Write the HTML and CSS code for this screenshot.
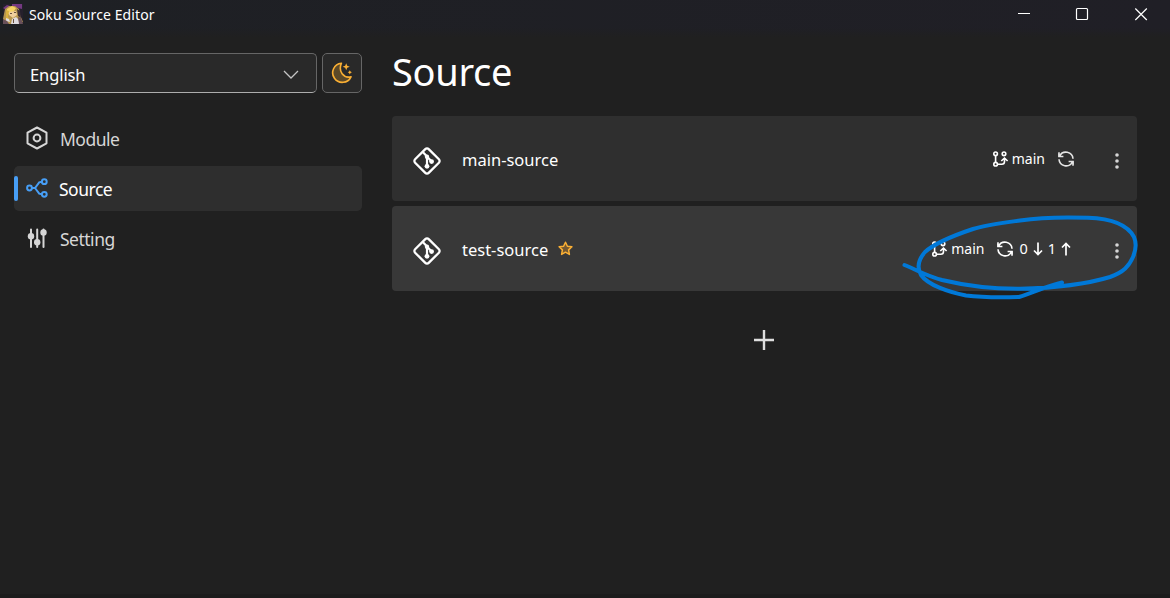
FILE: index.html
```html
<!DOCTYPE html>
<html lang="en">
<head>
<meta charset="utf-8">
<title>Soku Source Editor</title>
<link rel="stylesheet" href="styles.css">
</head>
<body>
<svg class="defs" width="0" height="0" aria-hidden="true">
  <symbol id="git" viewBox="0 0 28 28">
    <path d="M12.3 2.1a2.4 2.4 0 0 1 3.4 0L25.9 12.3a2.4 2.4 0 0 1 0 3.4L15.7 25.9a2.4 2.4 0 0 1-3.4 0L2.1 15.7a2.4 2.4 0 0 1 0-3.4z" fill="none" stroke="currentColor" stroke-width="2.3"/>
    <path d="M10 5.2l4 4.3v10M14.2 9.7l4.2 4.6" fill="none" stroke="currentColor" stroke-width="2.2"/>
    <g fill="currentColor"><circle cx="14" cy="9.8" r="2.2"/><circle cx="14" cy="19.3" r="2.4"/><circle cx="18.6" cy="14.6" r="2.4"/></g>
  </symbol>
  <symbol id="branch" viewBox="0 0 16 16">
    <g fill="none" stroke="currentColor" stroke-width="1.6"><circle cx="2.6" cy="2.8" r="1.8"/><circle cx="2.6" cy="13.2" r="1.8"/><circle cx="11" cy="2.8" r="1.8"/><path d="M2.6 4.7v6.600M4.500 13.200h4.300q2.700 0 2.700-2.700V7.600M8.300 10l3.200-3 3.100 3"/></g>
  </symbol>
  <symbol id="sync" viewBox="0 0 16 16">
    <g fill="none" stroke="currentColor" stroke-width="1.6"><path d="M1.6 5A7.1 7.1 0 0 1 15 7.7M14.4 11A7.1 7.1 0 0 1 1 8.3"/><path d="M1 1.3v4.2h4.4M15 14.7v-4.2h-4.4"/></g>
    <path d="M.4 2.2v3.9h4zM15.6 13.8V9.9h-4z" fill="currentColor"/>
  </symbol>
  <symbol id="dots" viewBox="0 0 4 16"><g fill="currentColor"><circle cx="2" cy="2" r="1.8"/><circle cx="2" cy="8" r="1.8"/><circle cx="2" cy="14" r="1.8"/></g></symbol>
</svg>

<header class="titlebar">
  <svg class="avatar" width="20" height="20" viewBox="0 0 20 20">
    <path d="M0 0h20v20H0z" fill="#25202c"/>
    <path d="M0 4l4-3 3 1-4 4zM9 0h10v5l-4-1-6-2z" fill="#743981"/>
    <path d="M2 5l4-3h6l4 3 1 6 3 7-5 2H3l-3-5z" fill="#b8974e"/>
    <path d="M4 5l5-3 4 2-2 3-7 4z" fill="#f6d363"/>
    <path d="M14 5l3 2 1 7-3-2z" fill="#3b2e36"/>
    <path d="M6 8l7-1 1 4-4 3-4-3z" fill="#f0cf9c"/>
    <path d="M3 6l3 1-1 6 2 3-4-1z" fill="#d9b040"/>
    <path d="M3 14l3 1 1 3-4-1zM9 15l4-2 2 2 2 5H8z" fill="#e0dce0"/>
    <path d="M0 15l4 2 2 3H0zM15 13l3 1 2 6h-4z" fill="#68505a"/>
    <path d="M7 9h2v1H7zM11 8h2v1h-2zM10 15h1v4h-1z" fill="#66503e"/>
  </svg>
  <span class="app-name">Soku Source Editor</span>
  <svg class="window-controls" width="138" height="28" viewBox="0 0 138 28" fill="none" stroke="#fff">
    <path d="M0 13.5h12"/><rect x="58.5" y="8.5" width="11" height="11" rx="1" stroke-width="1.2"/><path d="M117.300 8.500l11.500 11.500M128.800 8.500L117.300 20" stroke-width="1.2"/>
  </svg>
</header>

<div class="shell">
  <aside class="sidebar">
    <div class="toolbar">
      <div class="select"><span>English</span>
        <svg class="chevron" width="16" height="10" viewBox="0 0 16 10" fill="none" stroke="#c4c4c4" stroke-width="1.3"><path d="M1 1l7 7 7-7"/></svg>
      </div>
      <div class="theme">
        <svg width="22" height="22" viewBox="0 0 22 22"><path d="M10.400 1.200A9.600 9.600 0 1 0 20 14.800C12.500 16.500 7 9.500 10.400 1.200z" fill="#5c4928" stroke="#fbb034" stroke-width="1.6" stroke-linejoin="round"/><path d="M15.200 1.200l1 2.500 2.600 1-2.600 1-1 2.600-1-2.600-2.600-1 2.600-1z" fill="#fbb034"/><path d="M18.800 8.200l.7 1.400 1.400.7-1.400.7-.7 1.400-.7-1.400-1.400-.7 1.400-.7z" fill="#fbb034"/></svg>
      </div>
    </div>
    <nav>
      <div class="nav-item">
        <svg width="24" height="24" viewBox="0 0 24 24" fill="none" stroke="currentColor" stroke-width="2" stroke-linejoin="round"><path d="M12 1.500l9.500 5.200v10.600L12 22.500l-9.500-5.200V6.700z"/><circle cx="12" cy="12" r="3.400"/></svg>
        <span>Module</span>
      </div>
      <div class="nav-item active">
        <svg width="24" height="24" viewBox="0 0 24 24" fill="none" stroke="#479ef5" stroke-width="2"><circle cx="4.500" cy="12" r="2.400"/><circle cx="19.300" cy="5.700" r="2.400"/><circle cx="19.300" cy="18.300" r="2.400"/><path d="M7 12h3l4.200-5.600 2.800-.7M10 12l4.200 5.600 2.800.7"/></svg>
        <span>Source</span>
      </div>
      <div class="nav-item">
        <svg width="24" height="24" viewBox="0 0 24 24" fill="none" stroke="currentColor" stroke-width="2" stroke-linecap="round"><path d="M6 3.500v17.500M12.200 3.500v17.500M18.500 3.500v17.500"/><g fill="currentColor" stroke="none"><circle cx="6" cy="10.200" r="3.200"/><circle cx="12.200" cy="16.200" r="3.200"/><circle cx="18.500" cy="6.500" r="3.200"/></g></svg>
        <span>Setting</span>
      </div>
    </nav>
  </aside>

  <main class="content">
    <h1>Source</h1>
    <div class="cards">
      <section class="card">
        <svg class="git" width="28" height="28"><use href="#git"/></svg>
        <span class="name">main-source</span>
        <div class="status">
          <svg width="16" height="16"><use href="#branch"/></svg><span class="ref">main</span>
          <svg class="sync" width="16" height="16"><use href="#sync"/></svg>
        </div>
        <svg class="more" width="4" height="16"><use href="#dots"/></svg>
      </section>
      <section class="card selected">
        <svg class="git" width="28" height="28"><use href="#git"/></svg>
        <span class="name">test-source</span>
        <svg class="star" width="15" height="15" viewBox="0 0 15 15"><path d="M7.500 1.200l1.900 4 4.500.6-3.300 3.100.8 4.500-3.900-2.200-3.900 2.200.8-4.500-3.300-3.100 4.500-.6z" fill="#745831" stroke="#fbb034" stroke-width="1.5" stroke-linejoin="round"/></svg>
        <div class="status">
          <svg width="16" height="16"><use href="#branch"/></svg><span class="ref">main</span>
          <svg class="sync" width="16" height="16"><use href="#sync"/></svg>
          <span class="count">0</span>
          <svg width="10" height="14" viewBox="0 0 10 14" fill="none" stroke="currentColor" stroke-width="1.7"><path d="M5 .5v12M1 8.500l4 4 4-4"/></svg>
          <span class="count second">1</span>
          <svg width="10" height="14" viewBox="0 0 10 14" fill="none" stroke="currentColor" stroke-width="1.7"><path d="M5 13.500v-12M1 5.500l4-4 4 4"/></svg>
        </div>
        <svg class="more" width="4" height="16"><use href="#dots"/></svg>
      </section>
    </div>
    <div class="add"><svg width="20" height="20" viewBox="0 0 20 20" stroke="#dedede" stroke-width="2.4"><path d="M10 0v20M0 10h20"/></svg></div>
  </main>
</div>

<svg class="ink" width="240" height="90" viewBox="900 212 240 90" fill="none" stroke="#0078d7" stroke-width="4" stroke-linecap="round" stroke-linejoin="round">
  <path d="M904.500 265C919 271 927 276 942 280C967 286 993 289 1020 288.800C1053 288 1087 284 1110 277C1124 272 1129 266 1133 257C1136 250 1136.500 243 1134 237C1127 224 1110 218.500 1088 217.800C1066 217 1040 217.500 1020 220.500C1002 223 986 225 973 229C952 236 935 243 925 252C918 260 917 268 921 275C928 285 948 292 966 295.500C982 297.500 1003 297.500 1019 297C1034 292 1047 286 1062 282.500"/>
</svg>
</body>
</html>
```
FILE: styles.css
```css
* { box-sizing: border-box; }
body { margin: 0; width: 1170px; height: 598px; overflow: hidden; background: #202020; color: #fff; font-family: "Noto Sans", "Open Sans", sans-serif; font-size: 16px; }
svg { display: block; flex: none; }
span { white-space: nowrap; }
.defs { position: absolute; }
.titlebar { display: flex; height: 37px; padding: 0 14px 0 3px; background: linear-gradient(transparent 28px, #202020 37px), linear-gradient(90deg, #1e2024, #201f26); }
.avatar { margin: 4px 6px 0 0; }
.app-name { font-size: 14px; line-height: 29px; letter-spacing: .1px; }
.window-controls { margin-left: auto; }
.shell { display: flex; height: 561px; border-bottom: 4px solid #1c1c1c; }
.sidebar { width: 392px; padding: 16px 30px 0 14px; }
.toolbar { display: flex; gap: 5px; }
.select { display: flex; align-items: center; justify-content: space-between; width: 303px; height: 40px; padding: 0 17px 0 15px; background: #292929; border: 1px solid #666; border-bottom-color: #adadad; border-radius: 5px; }
.select span { padding-top: 3px; font-size: 16.5px; letter-spacing: -.1px; }
.chevron { margin-top: 3px; }
.theme { display: flex; align-items: center; justify-content: center; width: 40px; height: 40px; padding-right: 1px; background: #292929; border: 1px solid #666; border-radius: 5px; }
nav { display: grid; gap: 5px; margin-top: 23px; }
.nav-item { position: relative; display: flex; align-items: center; gap: 11.5px; height: 45px; padding-left: 10.5px; border-radius: 5px; color: #d6d6d6; font-size: 17.5px; letter-spacing: -.5px; }
.nav-item svg { margin-bottom: 2px; }
.nav-item span { padding-top: 0; }
.active { gap: 10.5px; background: #2e2e2e; color: #fff; }
.active::before { content: ""; position: absolute; left: 0; top: 10px; width: 4px; height: 25px; border-radius: 2px; background: #479ef5; }
.content { width: 745px; }
h1 { margin: 0; height: 79px; font-size: 38px; font-weight: 400; line-height: 68px; letter-spacing: -.3px; }
.cards { display: grid; gap: 5px; }
.card { display: flex; align-items: center; height: 85px; padding: 0 18px 0 21px; background: #2f2f2f; border-radius: 4px; }
.selected { background: #383838; }
.git { margin: 5px 21px 0 0; }
.name { padding-top: 2px; font-size: 16.5px; }
.star { margin-left: 10px; }
.status { display: flex; align-items: center; margin-left: auto; margin-right: 41px; font-size: 14px; }
.ref { margin-left: 3px; margin-right: 13px; }
.sync { color: #e5e5e5; }
.selected .sync { color: #fff; }
.count { margin: 0 5px 2px 6px; font-size: 14.5px; }
.second { margin: 0 5px 2px 5px; }
.selected .status { margin-right: 44px; }
.more { margin-top: 5px; color: #d6d6d6; }
.add { display: flex; justify-content: center; margin-top: 39px; padding-right: 2px; }
.ink { position: absolute; left: 900px; top: 212px; }
```
